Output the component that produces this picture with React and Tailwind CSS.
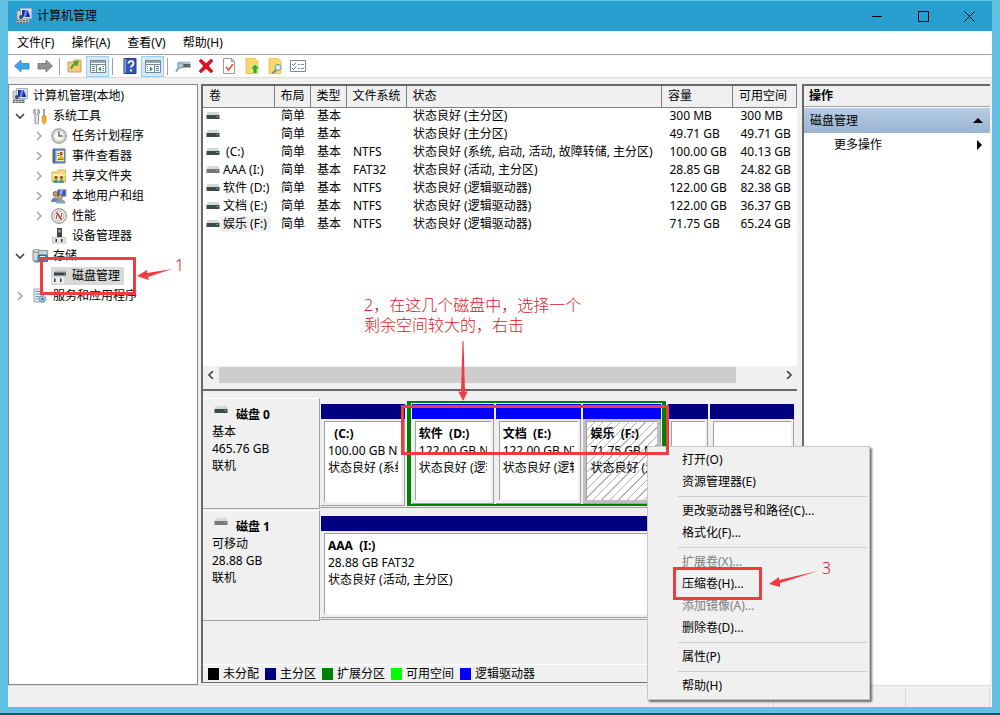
import React, { useState } from 'react';

const TREE = [
  { id: 'root', label: '计算机管理(本地)', level: 0, icon: 'computer' },
  { id: 'tools', label: '系统工具', level: 1, icon: 'tools', state: 'open' },
  { id: 'tasks', label: '任务计划程序', level: 2, icon: 'clock', state: 'closed' },
  { id: 'events', label: '事件查看器', level: 2, icon: 'book', state: 'closed' },
  { id: 'shares', label: '共享文件夹', level: 2, icon: 'shared', state: 'closed' },
  { id: 'users', label: '本地用户和组', level: 2, icon: 'users', state: 'closed' },
  { id: 'perf', label: '性能', level: 2, icon: 'perf', state: 'closed' },
  { id: 'devices', label: '设备管理器', level: 2, icon: 'device' },
  { id: 'storage', label: '存储', level: 1, icon: 'storage', state: 'open' },
  { id: 'disks', label: '磁盘管理', level: 2, icon: 'diskmgmt' },
  { id: 'services', label: '服务和应用程序', level: 1, icon: 'services', state: 'closed' },
];

const VOLUMES = [
  { name: '', fs: '', status: '状态良好 (主分区)', size: '300 MB', free: '300 MB' },
  { name: '', fs: '', status: '状态良好 (主分区)', size: '49.71 GB', free: '49.71 GB' },
  { name: ' (C:)', fs: 'NTFS', status: '状态良好 (系统, 启动, 活动, 故障转储, 主分区)', size: '100.00 GB', free: '40.13 GB' },
  { name: 'AAA (I:)', fs: 'FAT32', status: '状态良好 (活动, 主分区)', size: '28.85 GB', free: '24.82 GB', removable: true },
  { name: '软件 (D:)', fs: 'NTFS', status: '状态良好 (逻辑驱动器)', size: '122.00 GB', free: '82.38 GB' },
  { name: '文档 (E:)', fs: 'NTFS', status: '状态良好 (逻辑驱动器)', size: '122.00 GB', free: '36.37 GB' },
  { name: '娱乐 (F:)', fs: 'NTFS', status: '状态良好 (逻辑驱动器)', size: '71.75 GB', free: '65.24 GB', selected: true },
];

const LEGEND = [
  { label: '未分配', color: 'bg-black' },
  { label: '主分区', color: 'bg-[#000080]' },
  { label: '扩展分区', color: 'bg-[#008000]' },
  { label: '可用空间', color: 'bg-[#00ff00]' },
  { label: '逻辑驱动器', color: 'bg-[#0000ff]' },
];

const CONTEXT_MENU = [
  [{ label: '打开(O)' }, { label: '资源管理器(E)' }],
  [{ label: '更改驱动器号和路径(C)...' }, { label: '格式化(F)...' }],
  [
    { label: '扩展卷(X)...', disabled: true },
    { label: '压缩卷(H)...' },
    { label: '添加镜像(A)...', disabled: true },
    { label: '删除卷(D)...' },
  ],
  [{ label: '属性(P)' }],
  [{ label: '帮助(H)' }],
];

const ICONS = {
  computer: (
    <>
      <path d="M1 3h4v8H1z" fill="#d8d8d0" stroke="#8b8b85" strokeWidth=".6" />
      <path d="M4.500 .5h11v10h-11z" fill="#dfe5ea" stroke="#a3afb9" />
      <path d="M6 2h8v7H6z" fill="#1a2bb0" />
      <path d="M9 2h2.500L10 9H7.500z" fill="#5f8be6" />
      <path d="M11.500 2H14v6z" fill="#c3d5f7" />
      <path d="M1.500 11h12l-1 4H0z" fill="#b4b9bc" />
      <path d="M1 12.500h11M1 14.500h11" stroke="#5d666c" strokeDasharray="2 1" />
      <circle cx="5" cy="9" r="2" fill="#3d5260" />
    </>
  ),
  tools: (
    <>
      <path d="M3 1v4l1.500 1.500L6 5V1c2 1 2 4 .5 6v7.500a1.500 1.500 0 0 1-3.500 0V7C1 5 1.500 2 3 1z" fill="#e4e8ea" stroke="#6b757c" strokeWidth=".8" />
      <path d="M12 1v7" stroke="#7d868c" strokeWidth="1.500" />
      <path d="M10.500 8h3.500v5.500l-1 2h-1.500l-1-2z" fill="#f2b71b" stroke="#b97e0c" strokeWidth=".7" />
    </>
  ),
  clock: (
    <>
      <circle cx="8" cy="8" r="7.200" fill="#dfe2e6" stroke="#7b828a" />
      <circle cx="8" cy="8" r="5.200" fill="#fffbe8" stroke="#c5b27b" strokeWidth=".7" />
      <path d="M8 3.500V8h3.500" stroke="#3360a8" strokeWidth="1.300" fill="none" />
    </>
  ),
  book: (
    <>
      <path d="M2 1h12v14H2z" fill="#7f9dc6" stroke="#4d6c9a" />
      <path d="M2 1h2v14H2z" fill="#4a6796" />
      <path d="M5.500 3h7.500v10H5.500z" fill="#f4edc0" />
      <path d="M9 4h2.500v3H9z" fill="#d63a2b" />
      <path d="M6.500 5.500h2M6.500 7.500h2M6.500 11.500h6" stroke="#4777bd" />
      <path d="M10 7l2.500 4H7.500z" fill="#f0bd27" stroke="#a9821a" strokeWidth=".5" />
    </>
  ),
  shared: (
    <>
      <path d="M1 4h5l1-2h7.500v12H1z" fill="#f5d978" stroke="#d0a541" strokeWidth=".8" />
      <path d="M1.500 6h13v2h-13z" fill="#fbeaa6" />
      <circle cx="5" cy="9.500" r="1.400" fill="#6c5332" />
      <circle cx="10.500" cy="9.500" r="1.400" fill="#6c5332" />
      <path d="M2.500 15c0-5 5-5 5 0zM8 15c0-5 5-5 5 0z" fill="#4a9a80" />
    </>
  ),
  users: (
    <>
      <path d="M6.500 1.500H15v7H6.500z" fill="#3555b5" stroke="#a3afbb" />
      <path d="M9 2h3l-1 6H8z" fill="#88a9eb" />
      <circle cx="4.500" cy="6" r="2.500" fill="#c79a64" stroke="#5f4020" strokeWidth=".7" />
      <circle cx="9" cy="9" r="2.300" fill="#dcb27f" stroke="#5f4020" strokeWidth=".7" />
      <path d="M0 14c0-6 8-6 8.500 0z" fill="#6c83a5" />
      <path d="M5 15.500c0-6 9-6 9.500 0z" fill="#88a0b8" />
    </>
  ),
  perf: (
    <>
      <circle cx="8" cy="8" r="7.300" fill="#f4f4f4" stroke="#7a7a7a" />
      <circle cx="8" cy="8" r="5" fill="#fff" stroke="#d98c8a" strokeWidth=".8" />
      <path d="M5.500 4.500l5 7" stroke="#c2201e" strokeWidth="1.500" />
      <path d="M5.500 7v4M10.500 5v4" stroke="#c2504e" />
    </>
  ),
  device: (
    <>
      <path d="M6 0h5v9H6z" fill="#3e4347" />
      <path d="M7 1.500h3v3H7z" fill="#8f979d" />
      <path d="M1.500 9.500h13v5.500h-13z" fill="#e8e8e8" stroke="#c4c4c4" />
      <path d="M4.500 11h1.500v3H4.500zM10 11h1.500v3H10z" fill="#333" />
    </>
  ),
  storage: (
    <>
      <path d="M1 3c0-2 7-2 7 0v9c0 2-7 2-7 0z" fill="#d4d9dc" stroke="#757d83" strokeWidth=".8" />
      <path d="M1 3c0 2 7 2 7 0" fill="none" stroke="#757d83" strokeWidth=".8" />
      <path d="M6.500 2.500h9v4h-9z" fill="#cad3d8" stroke="#79858d" strokeWidth=".8" />
      <path d="M6 7.500h9.500v6H6z" fill="#3f90c9" stroke="#225e8c" strokeWidth=".8" />
      <path d="M8 8h5v2H8z" fill="#d8ecf7" />
      <path d="M2 12.500h5v2H2z" fill="#7b868c" />
    </>
  ),
  diskmgmt: (
    <>
      <path d="M3 4l2-1.500h10.500L15 6H3z" fill="#b7bcc0" />
      <path d="M3 4.500h12v3H3z" fill="#3f4447" />
      <path d="M13 5.500h1v1h-1z" fill="#60df7a" />
      <path d="M1 9.500h12V15H1z" fill="#ededed" />
      <path d="M3 10.500h1.500V14H3zM9 10.500h1.500V14H9z" fill="#333" />
    </>
  ),
  services: (
    <>
      <path d="M2 1h8v13H2z" fill="#e9eef3" stroke="#7890a8" strokeWidth=".8" />
      <path d="M3.500 3.500h5M3.500 6h5M3.500 8.500h4M3.500 11h3" stroke="#708aa5" />
      <circle cx="10.500" cy="11" r="3" fill="#dceaf5" stroke="#5b89b2" strokeWidth="1.800" strokeDasharray="1.500 .8" />
      <circle cx="10.500" cy="11" r="1.500" fill="#4d7ba4" />
    </>
  ),
  back: <path d="M.5 8L7 2v3.500h8V11H7v3z" fill="#3ca6e6" stroke="#3a86bd" strokeWidth=".8" />,
  forward: <path d="M15.500 8L9 2v3.500H1V11h8v3z" fill="#929292" stroke="#6c6c6c" strokeWidth=".8" />,
  up: (
    <>
      <path d="M1 4h5l1.500-2H14v12H1z" fill="#f2cb7e" stroke="#cda055" />
      <path d="M4 11c0-4 2-5 3.500-5l-1-2 5-1-1.500 5-1-1.200c-2 0-3 1-3.500 3.200z" fill="#4caf35" stroke="#2b7c1d" strokeWidth=".5" />
    </>
  ),
  treePane: (
    <>
      <path d="M.5 2.500h15v12H.5z" fill="#fff" stroke="#7d8790" />
      <path d="M1 3h14v2H1z" fill="#9aa6b2" />
      <path d="M1 6.500h14M6.500 7v7.500" stroke="#7d8790" />
      <path d="M2 8.500h3M2 10.500h3M2 12.500h3M12.500 8.500H14M12.500 10.500H14M12.500 12.500H14" stroke="#5379a5" />
      <path d="M11 8.500v5l-3-2.500z" fill="#35a53a" />
    </>
  ),
  actionPane: (
    <>
      <path d="M.5 2.500h15v12H.5z" fill="#fff" stroke="#7d8790" />
      <path d="M1 3h14v2H1z" fill="#9aa6b2" />
      <path d="M1 6.500h14M9.500 7v7.500" stroke="#7d8790" />
      <path d="M11 8.500h3M11 10.500h3M11 12.500h3M2 8.500h1M2 10.500h1M2 12.500h1" stroke="#5379a5" />
      <path d="M5 8.500v5L8 11z" fill="#35a53a" />
    </>
  ),
  help: (
    <>
      <path d="M2 .5h12v15H2z" fill="#3458b3" stroke="#203a83" />
      <path d="M2.500 1H4v14H2.500z" fill="#8aa3db" />
      <path d="M6.500 5.500c0-3.200 5-3 5 0 0 2-2.500 2-2.500 4" fill="none" stroke="#fff" strokeWidth="1.800" />
      <path d="M8 11.500h2v2H8z" fill="#fff" />
    </>
  ),
  rescan: (
    <>
      <path d="M2 5l2-1.500h11.500V6H2z" fill="#b8c1c7" />
      <path d="M4 6h11.500v3.500H4z" fill="#52605f" />
      <path d="M12.500 7H14v1h-1.500z" fill="#54c967" />
      <circle cx="5.500" cy="7.500" r="2.800" fill="#a9cbdf" stroke="#7d929f" />
      <path d="M3.500 10L1 13.500" stroke="#8698a2" strokeWidth="2" />
    </>
  ),
  remove: <path d="M3 1l5 4.500L13 1l2 2-4.500 5 4.500 5-2 2-5-4.500L3 15l-2-2 4.500-5L1 3z" fill="#e01020" stroke="#a80712" strokeWidth=".5" />,
  check: (
    <>
      <path d="M2.500.5h8l3 3v12h-11z" fill="#fff" stroke="#9a9a9a" />
      <path d="M10.500.5v3h3" fill="none" stroke="#9a9a9a" />
      <path d="M5 9l2.500 3L12 6" fill="none" stroke="#df4a2a" strokeWidth="1.400" />
    </>
  ),
  pageUp: (
    <>
      <path d="M2 .5h9l3 3v12H2z" fill="#fbd968" stroke="#e8c558" />
      <path d="M11 6l4.500 5H13v4.500H9V11H6.500z" fill="#36ad25" stroke="#fff" strokeWidth=".5" />
    </>
  ),
  pageFind: (
    <>
      <path d="M2 .5h9l3 3v12H2z" fill="#fbd968" stroke="#e8c558" />
      <circle cx="11" cy="9.500" r="3" fill="#d6edf8" stroke="#6b91a8" />
      <path d="M9 12l-3.500 3.500" stroke="#7d8b93" strokeWidth="2" />
    </>
  ),
  list: (
    <>
      <path d="M.5 2.500h15v11H.5z" fill="#fff" stroke="#7d8790" />
      <path d="M2 6l1.500 1.500L6 4.500M2 10l1.500 1.500L6 8.500" fill="none" stroke="#2878c8" />
      <path d="M8 6.500h2M11 6.500h3M8 10.500h2M11 10.500h3" stroke="#82888c" />
    </>
  ),
};

const Icon = ({ name }) => (
  <svg viewBox="0 0 16 16" className="size-4 shrink-0" aria-hidden="true">{ICONS[name]}</svg>
);

const DriveIcon = ({ removable }) => (
  <svg viewBox="0 0 14 8" className="h-2 w-3.5 shrink-0" aria-hidden="true">
    <path d="M1.500 0h11l1 3H.5z" fill={removable ? '#d9d9d9' : '#cfdad6'} />
    <path d="M.5 3h13v4H.5z" fill={removable ? '#777' : '#3d4a49'} />
    <path d="M10.500 4h1.500v1h-1.500z" fill={removable ? '#aaa' : '#5be28a'} />
  </svg>
);

const Chevron = ({ state }) => (
  <svg viewBox="0 0 10 10" className="size-2.5 shrink-0" fill="none" aria-hidden="true">
    {state === 'open' && <path d="M1 3l4 4 4-4" stroke="#404040" strokeWidth="1.600" />}
    {state === 'closed' && <path d="M3 1l4 4-4 4" stroke="#a0a0a0" strokeWidth="1.400" />}
  </svg>
);

const ToolButton = ({ icon, label, active }) => (
  <button aria-label={label} className={`flex h-[21px] w-[23px] items-center justify-center ${active ? 'border border-[#99cdf5] bg-[#d5eafa]' : ''}`}>
    <Icon name={icon} />
  </button>
);

const ToolDivider = () => <div className="mx-[3px] h-[17px] w-px bg-[#a0a0a0]" />;

const TitleBar = () => (
  <header className="flex h-[31px] shrink-0 items-center border-t border-[#62c6ea] bg-[#27a0d0] pl-2">
    <Icon name="computer" />
    <h1 className="ml-[5px] flex-1">计算机管理</h1>
    <button aria-label="最小化" className="flex h-full w-[46px] items-center justify-center">
      <svg viewBox="0 0 11 11" className="size-[11px]"><path d="M0 5.500h10" stroke="#000" /></svg>
    </button>
    <button aria-label="最大化" className="flex h-full w-[46px] items-center justify-center">
      <svg viewBox="0 0 11 11" className="size-[11px]"><path d="M.5.5h10v10H.5z" fill="none" stroke="#000" /></svg>
    </button>
    <button aria-label="关闭" className="flex h-full w-[46px] items-center justify-center">
      <svg viewBox="0 0 11 11" className="size-[11px]"><path d="M.5.5l10 10M10.500.5l-10 10" stroke="#000" /></svg>
    </button>
  </header>
);

const Volume = ({ name, size, status, logical, selected }) => (
  <div className="flex h-full min-w-0 flex-col">
    <div className={`h-[15px] shrink-0 ${logical ? 'bg-[#0000ff]' : 'bg-[#000080]'}`} />
    <div className={`flex min-h-0 flex-1 border-r border-b border-[#a0a0a0] pt-[2px] ${selected ? 'bg-[#c0c0c0] p-[3px]' : 'bg-[#f0f0f0] pr-[2px] pb-[3px] pl-[3px]'}`}>
      <div className={`min-w-0 flex-1 overflow-hidden border-t border-l border-[#a0a0a0] pt-[3px] pr-1 pl-[3px] leading-[17px] whitespace-pre ${selected ? 'bg-[repeating-linear-gradient(135deg,#ffffff_0px,#ffffff_5px,#b4b4b4_5px,#b4b4b4_6px)]' : 'bg-white'}`}>
        <div className="overflow-hidden">
          <p className="font-bold">{name}</p>
          <p>{size}</p>
          <p>{status}</p>
        </div>
      </div>
    </div>
  </div>
);

const DiskRow = ({ title, type, size, removable, children }) => (
  <section className="flex h-28 shrink-0">
    <div className="h-[111px] w-[117px] shrink-0 border-t border-r border-b border-t-white border-r-[#a0a0a0] border-b-[#a0a0a0] pt-[7px] pl-[9px] leading-[17px]">
      <div className="flex gap-2 pl-0.5">
        <DriveIcon removable={removable} />
        <h2 className="font-bold">{title}</h2>
      </div>
      <p>{type}</p>
      <p>{size}</p>
      <p>联机</p>
    </div>
    <div className="mt-[3px] flex h-[107px] min-w-0 flex-1 gap-[2px] border-b border-[#a0a0a0] pr-[3px] pb-px pl-px">
      {children}
    </div>
  </section>
);

const VolumeTable = () => (
  <table className="w-full table-fixed border-collapse">
    <colgroup>
      <col className="w-[71px]" />
      <col className="w-9" />
      <col className="w-9" />
      <col className="w-[60px]" />
      <col />
      <col className="w-[71px]" />
      <col className="w-[64px]" />
    </colgroup>
    <thead>
      <tr className="h-[21px] bg-[#f0f0f0] text-left">
        {['卷', '布局', '类型', '文件系统', '状态', '容量', '可用空间'].map(head => (
          <th key={head} className="border-r border-b border-[#808080] p-0 pl-[6px] font-normal whitespace-nowrap">{head}</th>
        ))}
      </tr>
    </thead>
    <tbody>
      {VOLUMES.map((vol, i) => (
        <tr key={i} className="h-[18px] whitespace-nowrap">
          <td className="p-0">
            <div className="flex items-center pl-[3px]">
              <DriveIcon removable={vol.removable} />
              <span className={`pr-1 pl-[3px] whitespace-pre ${vol.selected ? 'bg-[#f0f0f0]' : ''}`}>{vol.name}</span>
            </div>
          </td>
          <td className="p-0 pl-[7px]">简单</td>
          <td className="p-0 pl-[7px]">基本</td>
          <td className="p-0 pl-[7px]">{vol.fs}</td>
          <td className="p-0 pl-[7px]">{vol.status}</td>
          <td className="p-0 pl-[8px]">{vol.size}</td>
          <td className="p-0 pl-[8px]">{vol.free}</td>
        </tr>
      ))}
    </tbody>
  </table>
);

const ContextMenu = () => (
  <div role="menu" className="absolute top-[446px] left-[647px] w-[223px] border border-[#c8c8c8] bg-[#f0f0f0] py-[2px] shadow-[2px_2px_2px_rgba(0,0,0,0.55)]">
    {CONTEXT_MENU.map((group, i) => (
      <div key={i}>
        {i > 0 && <div className="mr-[2px] ml-[30px] flex h-[7px] items-center"><div className="h-px flex-1 bg-[#cfcfcf]" /></div>}
        {group.map(item => (
          <button key={item.label} role="menuitem" disabled={item.disabled} className="block h-[22px] w-full pl-[34px] text-left disabled:text-[#7d7d7d]">
            {item.label}
          </button>
        ))}
      </div>
    ))}
  </div>
);

// Red boxes, arrows and step texts that lie over the window
const Annotations = () => (
  <div className="pointer-events-none absolute inset-0 text-base leading-5 font-light text-[#dc141e]">
    <div className="absolute top-[257px] left-[40px] h-[38px] w-[96px] border-3 border-[#f03c41]" />
    <div className="absolute top-[405px] left-[401px] h-[50px] w-[268px] border-3 border-[#f03c41]" />
    <div className="absolute top-[567px] left-[673px] h-[33px] w-[89px] border-3 border-[#f03c41]" />
    <svg viewBox="0 0 36 14" className="absolute top-[268px] left-[137px] h-3.5 w-9" fill="#f03c41"><path d="M0 8L10 2v3L35 1 11 9l1 3z" /></svg>
    <svg viewBox="0 0 12 60" className="absolute top-[341px] left-[457px] h-[60px] w-3" fill="#f03c41"><path d="M6 60L1 50l3 1L5.500 0h1L8 51l3-1z" /></svg>
    <svg viewBox="0 0 50 16" className="absolute top-[571px] left-[769px] h-4 w-[50px]" fill="#f03c41"><path d="M0 13L10 6v3L49 0 11 12v4z" /></svg>
    <p className="absolute top-[255px] left-[175px]">1</p>
    <p className="absolute top-[295px] left-[364px] whitespace-nowrap">2，在这几个磁盘中，选择一个<br />剩余空间较大的，右击</p>
    <p className="absolute top-[558px] left-[822px]">3</p>
  </div>
);

const App = () => {
  const [selected, setSelected] = useState('disks');

  return (
    <div className="relative flex h-screen flex-col overflow-hidden border-b-2 border-[#07566b] bg-[#62c0e2] text-xs text-black font-['Noto_Sans','Noto_Sans_CJK_SC',sans-serif]">
      <div className="mx-2 mb-1.5 flex min-h-0 flex-1 flex-col bg-[#f0f0f0]">
        <TitleBar />

        <nav className="flex h-6 shrink-0 items-center gap-[17px] border-b border-[#a0a0a0] bg-white pl-[9px]">
          {['文件(F)', '操作(A)', '查看(V)', '帮助(H)'].map(item => (
            <button key={item}>{item}</button>
          ))}
        </nav>

        <div className="flex h-[23px] shrink-0 items-center border-b border-[#dcdcdc] bg-white pl-[2px]">
          <ToolButton icon="back" label="后退" />
          <ToolButton icon="forward" label="前进" />
          <ToolDivider />
          <ToolButton icon="up" label="向上" />
          <ToolButton icon="treePane" label="控制台树" active />
          <ToolDivider />
          <div className="w-[2px]" />
          <ToolButton icon="help" label="帮助" />
          <ToolButton icon="actionPane" label="操作窗格" active />
          <ToolDivider />
          <ToolButton icon="rescan" label="重新扫描" />
          <ToolButton icon="remove" label="删除" />
          <ToolButton icon="check" label="属性" />
          <ToolButton icon="pageUp" label="打开" />
          <ToolButton icon="pageFind" label="浏览" />
          <ToolButton icon="list" label="设置" />
        </div>

        <main className="flex min-h-0 flex-1 pt-1.5 pr-[2px]">
          {/* Console tree */}
          <aside className="mr-[3px] w-[190px] shrink-0 border border-[#828790] bg-white pt-px">
            <ul>
              {TREE.map(node => (
                <li key={node.id}>
                  <button
                    onClick={() => setSelected(node.id)}
                    className={`flex h-5 items-center gap-[7px] ${node.level === 0 ? 'pl-[3px]' : node.level === 1 ? 'pl-[6px]' : 'pl-[25px]'}`}
                  >
                    {node.level > 0 && <Chevron state={node.state} />}
                    <span className={`flex items-center gap-[5px] py-px pr-1 ${selected === node.id ? 'bg-[#d9d9d9]' : ''}`}>
                      <Icon name={node.icon} />
                      {node.label}
                    </span>
                  </button>
                </li>
              ))}
            </ul>
          </aside>

          <div className="mr-[5px] mb-[2px] flex min-w-0 flex-1 flex-col border-b border-l-2 border-[#696969]">
            {/* Volume list */}
            <div className="flex h-[307px] shrink-0 flex-col border-t-2 border-b-2 border-[#696969] bg-white">
              <VolumeTable />
              <div className="mt-auto flex h-[17px] items-center bg-[#f0f0f0]">
                <button aria-label="向左滚动" className="flex w-4 justify-center">
                  <svg viewBox="0 0 8 8" className="size-2" fill="none"><path d="M6 0L2 4l4 4" stroke="#404040" strokeWidth="1.600" /></svg>
                </button>
                <div className="flex h-4 flex-1"><div className="w-[92%] bg-[#cdcdcd]" /></div>
                <button aria-label="向右滚动" className="flex w-4 justify-center">
                  <svg viewBox="0 0 8 8" className="size-2" fill="none"><path d="M2 0l4 4-4 4" stroke="#404040" strokeWidth="1.600" /></svg>
                </button>
              </div>
              <div className="h-1.5 bg-[#f0f0f0]" />
            </div>

            {/* Graphical view */}
            <div className="flex min-h-0 flex-1 flex-col pt-[7px]">
              <DiskRow title="磁盘 0" type="基本" size="465.76 GB">
                <div className="min-w-0 flex-[84]"><div className="h-full pt-[3px]"><Volume name="  (C:)" size="100.00 GB NTFS" status="状态良好 (系统, 启动, 活动)" /></div></div>
                {/* Extended partition with its logical drives */}
                <div className="min-w-0 flex-[260]">
                  <div className="flex h-full gap-[2px] border-x-4 border-y-2 border-[#008000] bg-[#f0f0f0] px-px pt-px">
                    <div className="min-w-0 flex-[82]"><Volume logical name="软件  (D:)" size="122.00 GB NTFS" status="状态良好 (逻辑驱动器)" /></div>
                    <div className="min-w-0 flex-[86]"><Volume logical name="文档  (E:)" size="122.00 GB NTFS" status="状态良好 (逻辑驱动器)" /></div>
                    <div className="min-w-0 flex-[78]"><Volume logical selected name="娱乐  (F:)" size="71.75 GB NTFS" status="状态良好 (逻辑驱动器)" /></div>
                  </div>
                </div>
                <div className="min-w-0 flex-[40]"><div className="h-full pt-[3px]"><Volume /></div></div>
                <div className="min-w-0 flex-[84]"><div className="h-full pt-[3px]"><Volume /></div></div>
              </DiskRow>
              <DiskRow title="磁盘 1" type="可移动" size="28.88 GB" removable>
                <div className="min-w-0 flex-1 pt-[3px]"><Volume name="AAA  (I:)" size="28.88 GB FAT32" status="状态良好 (活动, 主分区)" /></div>
              </DiskRow>

              <div className="mt-auto flex h-[18px] items-center gap-[6px] border-t border-white pl-[5px]">
                {LEGEND.map(item => (
                  <div key={item.label} className="flex items-center gap-[4px]">
                    <span className={`h-3 w-[11px] ${item.color}`} />
                    {item.label}
                  </div>
                ))}
              </div>
            </div>
          </div>

          {/* Actions pane */}
          <aside className="w-[188px] shrink-0 border-t-2 border-l-2 border-[#696969] bg-white">
            <h2 className="flex h-[21px] items-center border-b border-[#a0a0a0] bg-[#f0f0f0] pl-[5px] font-bold">操作</h2>
            <button className="mt-px flex h-[25px] w-full items-center justify-between bg-linear-to-b from-[#b8cde5] to-[#98b3d2] pr-[7px] pl-[6px]">
              磁盘管理
              <svg viewBox="0 0 10 5" className="h-[5px] w-2.5"><path d="M5 0l5 5H0z" /></svg>
            </button>
            <button className="flex h-6 w-full items-center justify-between pr-2 pl-[30px]">
              更多操作
              <svg viewBox="0 0 5 10" className="h-2.5 w-[5px]"><path d="M0 0l5 5-5 5z" /></svg>
            </button>
          </aside>
        </main>

        <footer className="flex h-[22px] shrink-0 justify-end border-t border-[#dcdcdc] pt-[2px] pr-[2px]">
          <div className="w-[132px] border-l border-[#d7d7d7]" />
          <div className="w-[85px] border-x border-[#d7d7d7]" />
        </footer>
      </div>

      <ContextMenu />
      <Annotations />
    </div>
  );
};

export default App;
